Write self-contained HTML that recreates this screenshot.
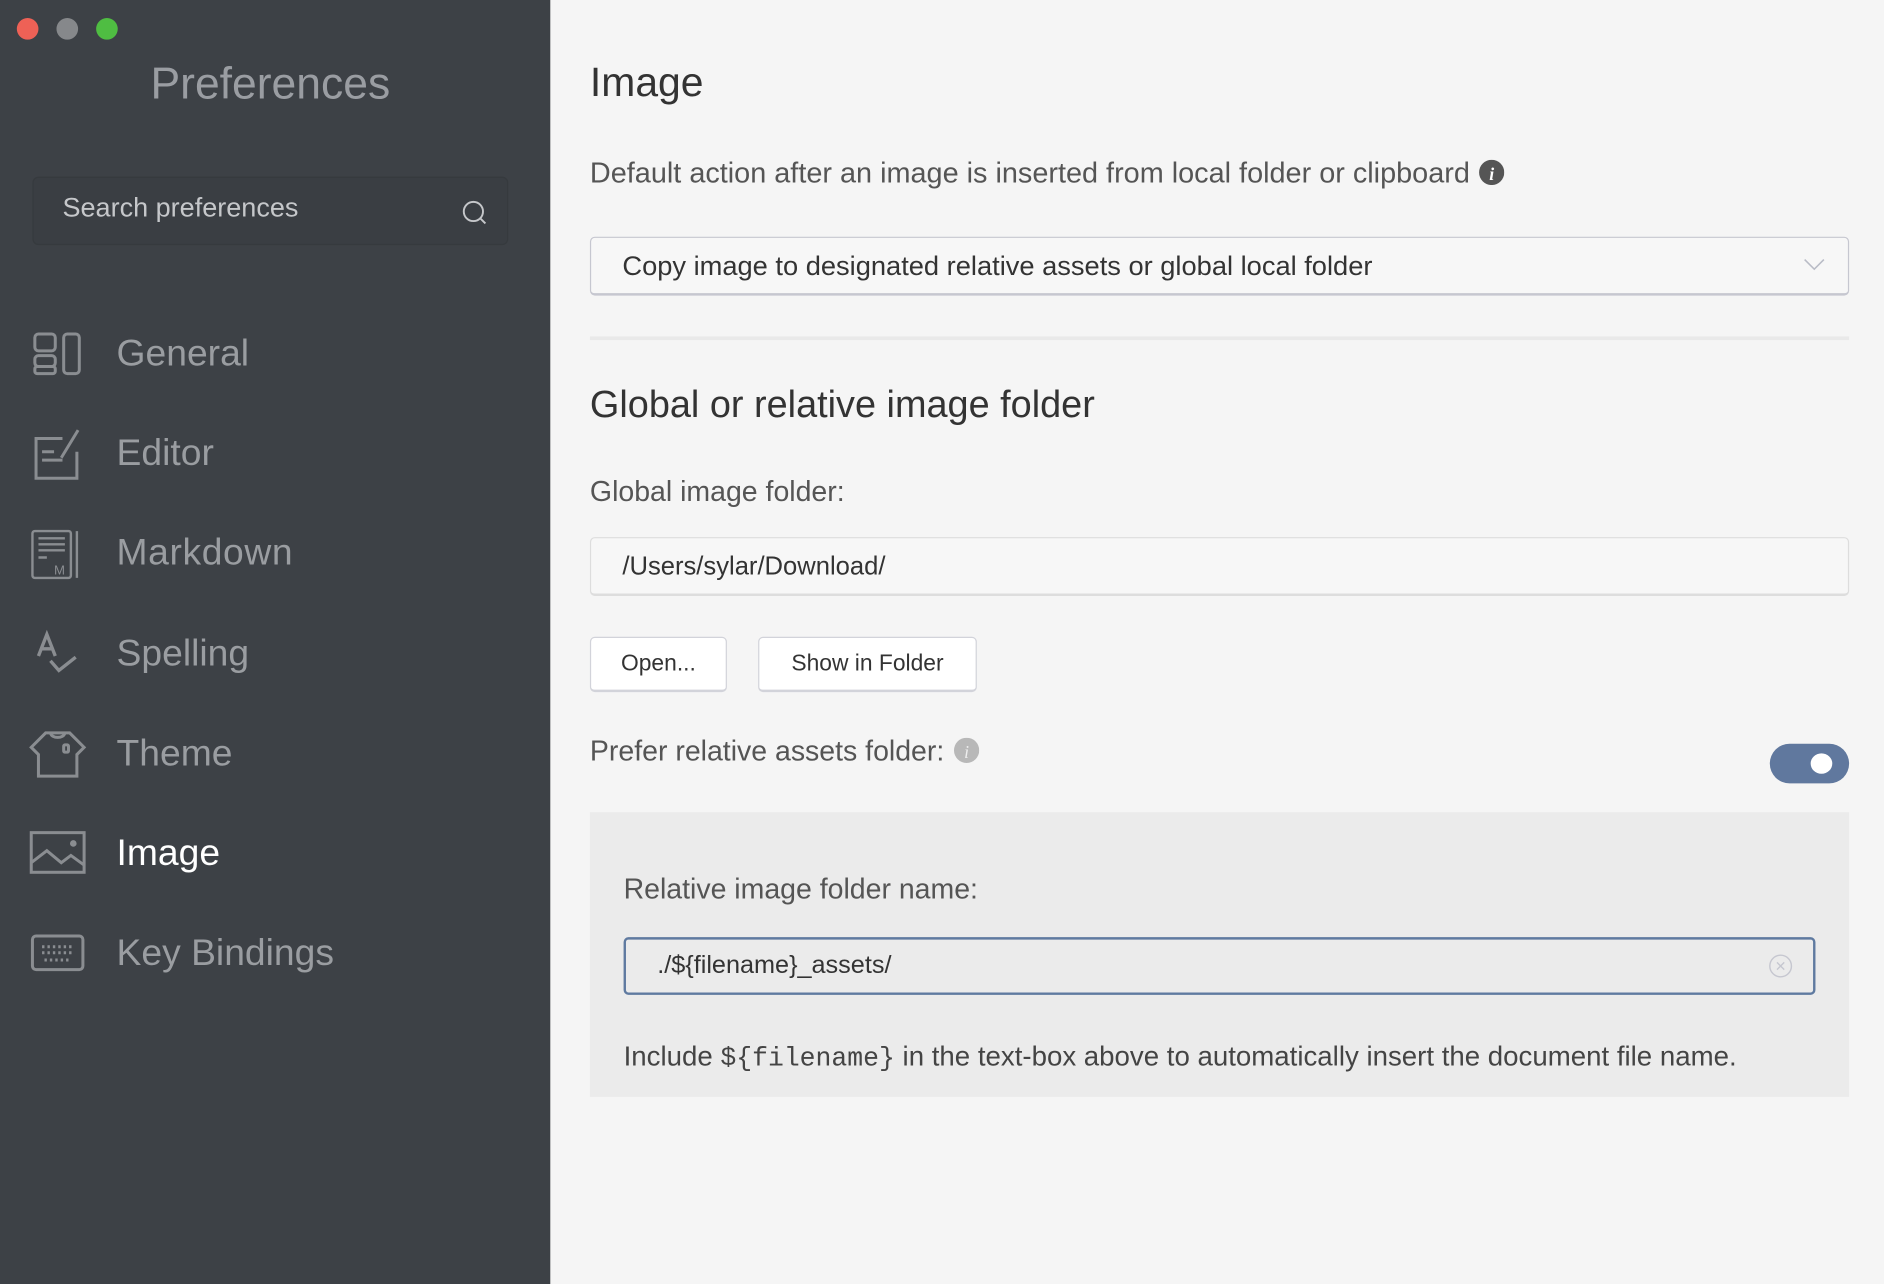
<!DOCTYPE html>
<html><head><meta charset="utf-8"><style>
html,body{margin:0;padding:0;width:1884px;height:1284px;overflow:hidden;background:#f5f5f5;}
#w{position:absolute;left:0;top:0;width:1568px;height:1069px;transform:scale(1.2015);transform-origin:0 0;font-family:"Liberation Sans",sans-serif;}
.a{position:absolute;white-space:nowrap;}
#side{position:absolute;left:0;top:0;width:458px;height:1069px;background:#3d4146;}
.dot{position:absolute;top:15px;width:18px;height:18px;border-radius:50%;}
.mi{position:absolute;left:97px;font-size:31px;color:#9a9da1;transform:translateY(-50%);}
.ic{position:absolute;left:24px;}
.lbl{font-size:23.7px;color:#555;}
.inf{display:inline-block;vertical-align:-2px;margin-left:8px;}
</style></head><body><div id="w">
<div id="side">
<div class="dot" style="left:14px;background:#ee6156"></div>
<div class="dot" style="left:47px;background:#86888b"></div>
<div class="dot" style="left:80px;background:#4fbd42"></div>
<div class="a" style="left:0;width:450px;text-align:center;top:49px;font-size:37px;color:#9a9da2;">Preferences</div>
<div class="a" style="left:27px;top:147px;width:394px;height:55px;background:#3a3e43;border:1px solid #363a3e;border-radius:5px;"></div>
<div class="a" style="left:52px;top:160px;font-size:22.5px;color:#c5c7ca;">Search preferences</div>
<svg class="a" style="left:384px;top:166px" width="24" height="24" viewBox="0 0 24 24" fill="none" stroke="#c5c7ca" stroke-width="1.6"><circle cx="10" cy="10" r="8"/><path d="M16 16l4 4"/></svg>

<svg class="ic" style="top:276px" width="46" height="38" viewBox="0 0 46 38" fill="none" stroke="#8a8d91" stroke-width="2.5"><rect x="5" y="2" width="17" height="14" rx="3"/><rect x="5" y="20" width="17" height="9" rx="3"/><rect x="29" y="2" width="13" height="33" rx="3"/><rect x="5" y="29" width="17" height="6" rx="2"/></svg>
<div class="mi" style="top:294px">General</div>
<svg class="ic" style="top:356px" width="46" height="44" viewBox="0 0 46 44" fill="none" stroke="#8a8d91" stroke-width="2.5"><path d="M28 9H6v33h34V20"/><path d="M11 20h10M11 27h17M27 25L41 2"/></svg>
<div class="mi" style="top:377px">Editor</div>
<svg class="ic" style="top:440px" width="46" height="44" viewBox="0 0 46 44" fill="none" stroke="#8a8d91" stroke-width="2"><rect x="3" y="2" width="32" height="39" rx="2"/><path d="M40 2v39M8 8h22M8 13h22M8 18h22M8 24h7"/><text x="21" y="38" font-size="11" fill="#8a8d91" stroke="none" font-family="Liberation Sans">M</text></svg>
<div class="mi" style="top:460px;letter-spacing:0.5px">Markdown</div>
<svg class="ic" style="top:524px" width="46" height="44" viewBox="0 0 46 44" fill="none" stroke="#8a8d91" stroke-width="2.8"><path d="M8 22L15 4l7 18M10 16h10M18 26l7 8 14-11"/></svg>
<div class="mi" style="top:544px">Spelling</div>
<svg class="ic" style="top:606px" width="48" height="44" viewBox="0 0 48 44" fill="none" stroke="#8a8d91" stroke-width="2.5"><path d="M14 4h20l12 12-6 6v18H8V22l-6-6z"/><path d="M18 4c1 5 11 5 12 0"/><rect x="29" y="14" width="4" height="6" rx="1"/></svg>
<div class="mi" style="top:627px">Theme</div>
<svg class="ic" style="top:690px" width="48" height="40" viewBox="0 0 48 40" fill="none" stroke="#8a8d91" stroke-width="2.5"><rect x="2" y="3" width="44" height="33"/><path d="M2 28l13-10 12 10 8-6 11 8"/><circle cx="37" cy="12" r="1.5" fill="#8a8d91"/></svg>
<div class="mi" style="top:710px;color:#fff">Image</div>
<svg class="ic" style="top:776px" width="48" height="36" viewBox="0 0 48 36" fill="none" stroke="#8a8d91" stroke-width="2.5"><rect x="3" y="3" width="42" height="28" rx="3"/><path d="M11 12h27M11 17h27M13 23h22" stroke-dasharray="2 2.5"/></svg>
<div class="mi" style="top:793px">Key Bindings</div>
</div>

<div class="a" style="left:491px;top:50px;font-size:34px;color:#333;">Image</div>
<div class="a lbl" style="left:491px;top:131px;font-size:24px;">Default action after an image is inserted from local folder or clipboard<svg class="inf" width="21" height="21" viewBox="0 0 20 20"><circle cx="10" cy="10" r="10" fill="#555"/><text x="10" y="16" text-anchor="middle" font-size="14" font-style="italic" font-weight="bold" fill="#fff" font-family="Liberation Serif">i</text></svg></div>
<div class="a" style="left:491px;top:197px;width:1046px;height:46px;border:1px solid #c6c7d0;border-bottom-width:2px;border-radius:4px;background:#f7f7f7;"></div>
<div class="a" style="left:518px;top:208px;font-size:22.7px;color:#333;">Copy image to designated relative assets or global local folder</div>
<svg class="a" style="left:1501px;top:214px" width="18" height="12" viewBox="0 0 18 12" fill="none" stroke="#b9bcc6" stroke-width="1.3"><path d="M1 2l8 8 8-8"/></svg>
<div class="a" style="left:491px;top:280px;width:1048px;height:3px;background:#e9e9e9;"></div>
<div class="a" style="left:491px;top:318px;font-size:31.5px;color:#333;">Global or relative image folder</div>
<div class="a lbl" style="left:491px;top:397px;">Global image folder:</div>
<div class="a" style="left:491px;top:447px;width:1046px;height:46px;border:1px solid #ddd;border-bottom-width:2px;border-radius:4px;background:#f7f7f7;"></div>
<div class="a" style="left:518px;top:459px;font-size:21.3px;color:#333;">/Users/sylar/Download/</div>
<div class="a" style="left:491px;top:530px;width:112px;height:43px;border:1px solid #d2d3da;border-bottom-width:2px;border-radius:4px;background:#fff;"></div>
<div class="a" style="left:491px;top:542px;width:114px;text-align:center;font-size:19px;color:#333;">Open...</div>
<div class="a" style="left:631px;top:530px;width:180px;height:43px;border:1px solid #d2d3da;border-bottom-width:2px;border-radius:4px;background:#fff;"></div>
<div class="a" style="left:631px;top:542px;width:182px;text-align:center;font-size:19px;color:#333;">Show in Folder</div>
<div class="a lbl" style="left:491px;top:613px;">Prefer relative assets folder:<svg class="inf" width="21" height="21" viewBox="0 0 20 20"><circle cx="10" cy="10" r="10" fill="#b8b8b8"/><text x="10" y="16" text-anchor="middle" font-size="14" font-style="italic" fill="#eee" font-family="Liberation Serif">i</text></svg></div>
<div class="a" style="left:1473px;top:619px;width:66px;height:33px;border-radius:17px;background:#60789e;"></div>
<div class="a" style="left:1507px;top:627px;width:18px;height:17px;border-radius:50%;background:#fff;"></div>
<div class="a" style="left:491px;top:676px;width:1048px;height:237px;background:#ebebeb;"></div>
<div class="a lbl" style="left:519px;top:728px;">Relative image folder name:</div>
<div class="a" style="left:519px;top:780px;width:988px;height:44px;border:2px solid #5f7aa0;border-radius:4px;"></div>
<div class="a" style="left:547px;top:792px;font-size:21px;color:#333;">./${filename}_assets/</div>
<svg class="a" style="left:1472px;top:794px" width="20" height="20" viewBox="0 0 20 20" fill="none" stroke="#c6c7d0" stroke-width="1.2"><circle cx="10" cy="10" r="9"/><path d="M7 7l6 6M13 7l-6 6"/></svg>
<div class="a lbl" style="left:519px;top:866px;color:#444;font-size:23px;">Include <span style="font-family:'Liberation Mono',monospace;font-size:22px;">${filename}</span> in the text-box above to automatically insert the document file name.</div>
</div></body></html>
